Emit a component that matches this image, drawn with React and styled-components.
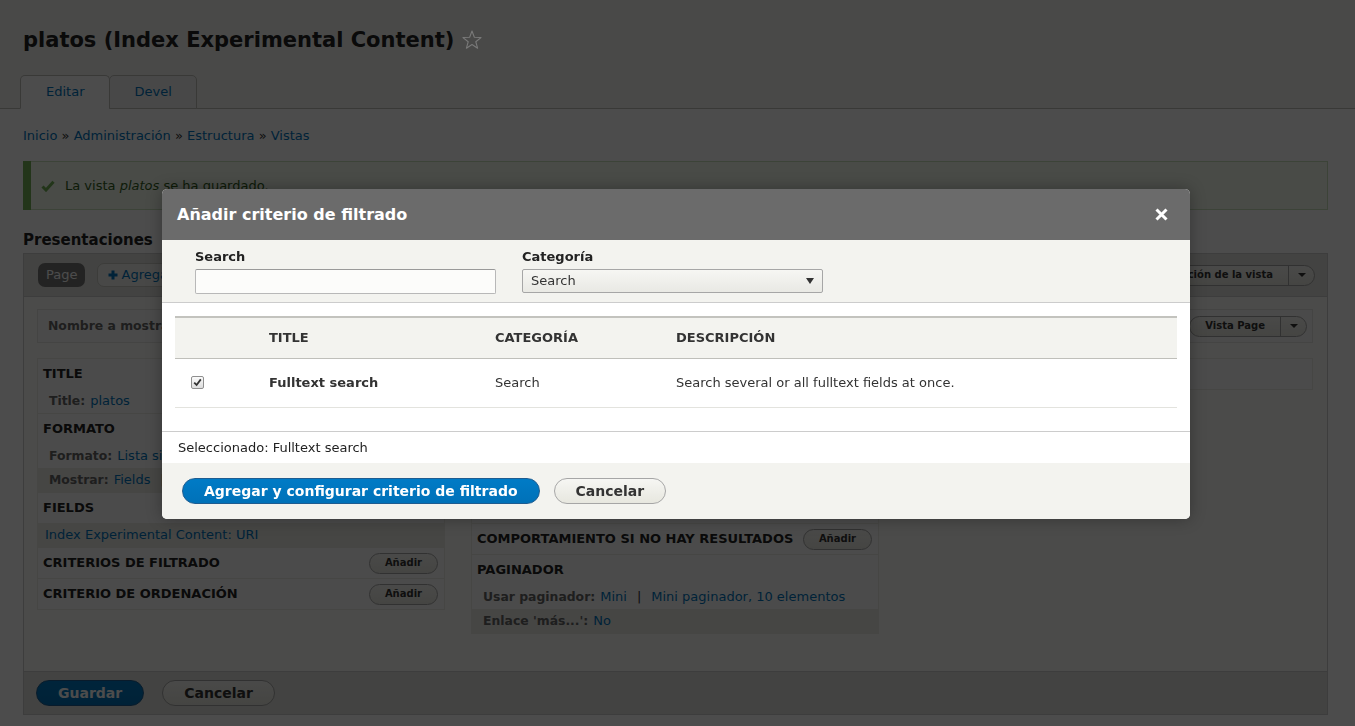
import React from 'react';
import styled, { createGlobalStyle } from 'styled-components';

// --- Global ---

const GlobalStyle = createGlobalStyle`
  html, body { margin: 0; padding: 0; }
  body {
    background: #fff;
    color: #222;
    font-family: "DejaVu Sans", "Liberation Sans", sans-serif;
    font-size: 13px;
    line-height: 20px;
  }
  * { box-sizing: border-box; }
`;

// --- Page header ---

const ContentHeader = styled.header`
  background: #f5f5f2;
  padding: 26px 27px 0 23px;
`;

const PageTitle = styled.h1`
  margin: 0;
  display: flex;
  align-items: center;
  gap: 8px;
  font-size: 21px;
  line-height: 28px;
  font-weight: bold;
  color: #222;
`;

// the shortcut star shows through the dialog overlay in the screenshot
const ShortcutStar = styled.span`
  position: relative;
  z-index: 101;
  display: inline-flex;
  opacity: 0.6;
`;

const Tabs = styled.ul`
  display: flex;
  list-style: none;
  height: 34px;
  margin: 21px -27px 0 -23px;
  padding: 0 0 0 20px;
  border-bottom: 1px solid #bfbfba;
`;

const Tab = styled.li`
  height: 34px;
  margin-bottom: -1px;
  margin-left: ${(p) => (p.$first ? '0' : '-1px')};
  padding: 0 24px 0 25px;
  display: flex;
  align-items: center;
  border: 1px solid #bfbfba;
  border-bottom-color: ${(p) => (p.$active ? '#fff' : '#bfbfba')};
  border-radius: 5px 5px 0 0;
  background: ${(p) => (p.$active ? '#fff' : '#f2f2f0')};
  color: #0074bd;
`;

// --- Main region ---

const Main = styled.main`
  padding: 0 27px 13px 23px;
`;

const Breadcrumb = styled.nav`
  margin-top: 17px;
  color: #333;
`;

const Link = styled.a`
  color: #0074bd;
  text-decoration: none;
`;

const Message = styled.div`
  margin: 15px 0 0 8px;
  display: flex;
  align-items: center;
  gap: 10px;
  padding: 14px 20px 13px 10px;
  border: 1px solid #c9e1bd;
  border-left: 0;
  background: #f3faef;
  box-shadow: -8px 0 0 #77b259;
  color: #325e1c;
`;

const SectionTitle = styled.h2`
  margin: 20px 0 3px;
  font-size: 15px;
  line-height: 20px;
  font-weight: bold;
  color: #222;
`;

// --- Views edit panel ---

const ViewPanel = styled.div`
  border: 1px solid #ccc;
  background: #fbfbf9;
`;

const DisplayBar = styled.div`
  height: 43px;
  display: flex;
  align-items: center;
  gap: 12px;
  padding: 0 12px 0 14px;
  background: #e1e2dc;
  border-bottom: 1px solid #ccc;
`;

const DisplayTab = styled.span`
  height: 24px;
  padding: 0 8px;
  display: flex;
  align-items: center;
  border-radius: 7px;
  background: #777;
  color: #fff;
`;

const AddDisplay = styled.span`
  height: 24px;
  padding: 0 10px;
  display: flex;
  align-items: center;
  gap: 3px;
  border: 1px solid #c8c8c2;
  border-radius: 7px;
  background: #f2f2ee;
  color: #0074bd;
`;

const DropButton = styled.div`
  margin-left: ${(p) => (p.$push ? 'auto' : '0')};
  height: 21px;
  display: flex;
  align-items: stretch;
  border: 1px solid #a6a6a6;
  border-radius: 11px;
  background: linear-gradient(to bottom, #f6f6f3, #e7e7df);
  color: #333;
  font-size: 10px;
  font-weight: bold;
`;

const DropMain = styled.span`
  display: flex;
  align-items: center;
  padding: 0 15px;
  border-right: 1px solid #a6a6a6;
`;

const DropToggle = styled.span`
  width: 25px;
  display: flex;
  align-items: center;
  justify-content: center;
  &::after {
    content: '';
    border-left: 4px solid transparent;
    border-right: 4px solid transparent;
    border-top: 4px solid #333;
  }
`;

const PanelBody = styled.div`
  padding: 12px 14px 37px 13px;
`;

const NameBox = styled.div`
  height: 34px;
  display: flex;
  align-items: center;
  padding: 0 5px 0 10px;
  border: 1px solid #e4e4df;
  background: #f9f9f7;
`;

const Label = styled.span`
  font-weight: bold;
  font-size: 12.4px;
  color: #666;
  margin-right: 5px;
`;

const Columns = styled.div`
  margin-top: 15px;
  display: grid;
  grid-template-columns: repeat(3, 1fr);
  gap: 26px;
  align-items: start;
`;

const Column = styled.div`
  border: 1px solid #e9e9e4;
  background: #fcfcfa;
`;

const Bucket = styled.div`
  border-bottom: 1px solid #e9e9e4;
  &:last-child { border-bottom: 0; }
`;

const BucketHeader = styled.div`
  height: 30px;
  display: flex;
  align-items: center;
  justify-content: space-between;
  padding: 0 6px 0 5px;
  font-weight: bold;
  text-transform: uppercase;
  color: #222;
`;

const SmallButton = styled.span`
  height: 21px;
  padding: 0 15px;
  display: inline-flex;
  align-items: center;
  border: 1px solid #a6a6a6;
  border-radius: 20px;
  background: linear-gradient(to bottom, #f6f6f3, #e7e7df);
  color: #333;
  font-size: 10px;
  font-weight: bold;
  text-transform: none;
`;

const SettingRow = styled.div`
  height: ${(p) => p.$h || 24}px;
  display: flex;
  align-items: center;
  padding: 0 ${(p) => p.$pad || 11}px;
  background: ${(p) => (p.$alt ? '#eaeae5' : 'transparent')};
  white-space: nowrap;
`;

const Sep = styled.span`
  margin: 0 10px;
  color: #333;
`;

const FormActions = styled.div`
  display: flex;
  gap: 18px;
  padding: 8px 12px 8px;
  background: #e1e2dc;
  border-top: 1px solid #ccc;
`;

const Button = styled.span`
  height: 26px;
  padding: 0 21px;
  display: inline-flex;
  align-items: center;
  border: 1px solid ${(p) => (p.$primary ? '#1e5c90' : '#a6a6a6')};
  border-radius: 20px;
  background: ${(p) =>
    p.$primary
      ? 'linear-gradient(to bottom, #007bc6, #0071b8)'
      : 'linear-gradient(to bottom, #f6f6f3, #e7e7df)'};
  color: ${(p) => (p.$primary ? '#fff' : '#333')};
  font-size: 14px;
  font-weight: bold;
  white-space: nowrap;
`;

// --- Dialog ---

const Overlay = styled.div`
  position: fixed;
  inset: 0;
  background: rgba(0, 0, 0, 0.7);
  z-index: 100;
`;

const Dialog = styled.div`
  position: fixed;
  top: 189px;
  left: 162px;
  width: 1028px;
  z-index: 101;
  background: #fff;
  border-radius: 5px;
  overflow: hidden;
  box-shadow: 0 0 16px rgba(0, 0, 0, 0.3);
`;

const TitleBar = styled.div`
  height: 51px;
  display: flex;
  align-items: center;
  justify-content: space-between;
  padding: 0 22px 0 15px;
  background: #6b6b6b;
  color: #fff;
  font-size: 16px;
  font-weight: bold;
`;

const Controls = styled.div`
  display: flex;
  gap: 26px;
  padding: 7px 33px 8px;
  background: #f3f3ef;
  border-bottom: 1px solid #ccc;
`;

const Field = styled.div`
  display: flex;
  flex-direction: column;
  gap: 2px;
  width: 301px;
`;

const FieldLabel = styled.label`
  font-weight: bold;
  color: #222;
`;

const TextInput = styled.input`
  height: 25px;
  border: 1px solid #b8b8b8;
  border-top-color: #999;
  border-radius: 2px;
  background: #fcfcfa;
  font: inherit;
`;

const SelectBox = styled.div`
  height: 24px;
  display: flex;
  align-items: center;
  justify-content: space-between;
  padding: 0 8px;
  border: 1px solid #a6a6a6;
  border-radius: 2px;
  background: linear-gradient(to bottom, #f6f6f3, #e9e9e4);
  color: #333;
  &::after {
    content: '';
    border-left: 4px solid transparent;
    border-right: 4px solid transparent;
    border-top: 6px solid #333;
  }
`;

const OptionsTable = styled.div`
  margin: 13px 13px 23px;
`;

const TableRow = styled.div`
  display: grid;
  grid-template-columns: 84px 226px 181px 1fr;
  align-items: center;
  height: ${(p) => (p.$head ? 43 : 49)}px;
  border-top: ${(p) => (p.$head ? '2px solid #c3c3be' : '0')};
  border-bottom: 1px solid ${(p) => (p.$head ? '#bfbfba' : '#e3e3de')};
  background: ${(p) => (p.$head ? '#f3f3ef' : '#fff')};
  font-weight: ${(p) => (p.$head ? 'bold' : 'normal')};
  text-transform: ${(p) => (p.$head ? 'uppercase' : 'none')};
  color: #333;
`;

const Cell = styled.div`
  padding-left: ${(p) => (p.$check ? 16 : 10)}px;
  font-weight: ${(p) => (p.$strong ? 'bold' : 'inherit')};
  display: flex;
  align-items: center;
`;

const FakeCheckbox = styled.span`
  width: 13px;
  height: 13px;
  display: inline-flex;
  align-items: center;
  justify-content: center;
  border: 1px solid #8f8f8f;
  border-radius: 2px;
  background: linear-gradient(to bottom, #fbfbfb, #dcdcdc);
  margin-top: -2px;
`;

const SelectedInfo = styled.div`
  padding: 6px 16px 5px;
  border-top: 1px solid #ccc;
  color: #222;
`;

const ButtonPane = styled.div`
  display: flex;
  gap: 14px;
  padding: 15px 20px;
  background: #f3f3ef;
`;

// --- Icons ---

const Star = () => (
  <svg width="20" height="20" viewBox="0 0 20 20">
    <polygon
      points="10,1 12.35,7.26 19.03,7.56 13.8,11.74 15.58,18.19 10,14.5 4.42,18.19 6.2,11.74 0.97,7.56 7.65,7.26"
      fill="none"
      stroke="#9a9a9a"
      strokeWidth="1.1"
      strokeLinejoin="round"
    />
  </svg>
);

const Check = () => (
  <svg width="14" height="12" viewBox="0 0 14 12">
    <path d="M1.5 6.5 L5 10 L12.5 1.8" fill="none" stroke="#73b355" strokeWidth="3" />
  </svg>
);

const Plus = () => (
  <svg width="10" height="10" viewBox="0 0 10 10">
    <path d="M5 0.5 V9.5 M0.5 5 H9.5" stroke="#0074bd" strokeWidth="3" />
  </svg>
);

const CloseX = () => (
  <svg width="13" height="13" viewBox="0 0 13 13">
    <path d="M1.5 1.5 L11.5 11.5 M11.5 1.5 L1.5 11.5" stroke="#fff" strokeWidth="3" />
  </svg>
);

const Tick = () => (
  <svg width="9" height="9" viewBox="0 0 9 9">
    <path d="M1.2 4.6 L3.6 7 L7.8 1.4" fill="none" stroke="#333" strokeWidth="1.8" />
  </svg>
);

// --- Component ---

const App = () => (
  <>
    <GlobalStyle />
    <ContentHeader>
      <PageTitle>
        platos (Index Experimental Content)
        <ShortcutStar><Star /></ShortcutStar>
      </PageTitle>
      <Tabs>
        <Tab $first $active>Editar</Tab>
        <Tab>Devel</Tab>
      </Tabs>
    </ContentHeader>

    <Main>
      <Breadcrumb>
        <Link>Inicio</Link> » <Link>Administración</Link> » <Link>Estructura</Link> » <Link>Vistas</Link>
      </Breadcrumb>

      <Message>
        <Check />
        <span>La vista <em>platos</em> se ha guardado.</span>
      </Message>

      <SectionTitle>Presentaciones</SectionTitle>

      <ViewPanel>
        <DisplayBar>
          <DisplayTab>Page</DisplayTab>
          <AddDisplay><Plus />Agregar Page</AddDisplay>
          <DropButton $push>
            <DropMain>Editar nombre/descripción de la vista</DropMain>
            <DropToggle />
          </DropButton>
        </DisplayBar>

        <PanelBody>
          <NameBox>
            <Label>Nombre a mostrar:</Label>
            <Link>Page</Link>
            <DropButton $push>
              <DropMain>Vista Page</DropMain>
              <DropToggle />
            </DropButton>
          </NameBox>

          <Columns>
            <Column>
              <Bucket>
                <BucketHeader>Title</BucketHeader>
                <SettingRow><Label>Title:</Label><Link>platos</Link></SettingRow>
              </Bucket>
              <Bucket>
                <BucketHeader>Formato</BucketHeader>
                <SettingRow>
                  <Label>Formato:</Label><Link>Lista sin formato</Link>
                  <Sep>|</Sep><Link>Configuración</Link>
                </SettingRow>
                <SettingRow $alt>
                  <Label>Mostrar:</Label><Link>Fields</Link>
                  <Sep>|</Sep><Link>Configuración</Link>
                </SettingRow>
              </Bucket>
              <Bucket>
                <BucketHeader>Fields <SmallButton>Añadir</SmallButton></BucketHeader>
                <SettingRow $alt $pad={7} $h={24}><Link>Index Experimental Content: URI</Link></SettingRow>
              </Bucket>
              <Bucket>
                <BucketHeader>Criterios de filtrado <SmallButton>Añadir</SmallButton></BucketHeader>
              </Bucket>
              <Bucket>
                <BucketHeader>Criterio de ordenación <SmallButton>Añadir</SmallButton></BucketHeader>
              </Bucket>
            </Column>

            <Column>
              <Bucket>
                <BucketHeader>Configuración de Page</BucketHeader>
                <SettingRow><Label>Ruta:</Label><Link>/platos</Link></SettingRow>
                <SettingRow $alt><Label>Menú:</Label><Link>Sin menú</Link></SettingRow>
                <SettingRow><Label>Acceso:</Label><Link>Ninguno</Link></SettingRow>
              </Bucket>
              <Bucket>
                <BucketHeader>Cabecera <SmallButton>Añadir</SmallButton></BucketHeader>
              </Bucket>
              <Bucket>
                <BucketHeader>Pie de página <SmallButton>Añadir</SmallButton></BucketHeader>
              </Bucket>
              <Bucket>
                <BucketHeader>Comportamiento si no hay resultados <SmallButton>Añadir</SmallButton></BucketHeader>
              </Bucket>
              <Bucket>
                <BucketHeader>Paginador</BucketHeader>
                <SettingRow>
                  <Label>Usar paginador:</Label><Link>Mini</Link>
                  <Sep>|</Sep><Link>Mini paginador, 10 elementos</Link>
                </SettingRow>
                <SettingRow $alt><Label>Enlace 'más...':</Label><Link>No</Link></SettingRow>
              </Bucket>
            </Column>

            <Column>
              <Bucket>
                <BucketHeader>▸ Avanzado</BucketHeader>
              </Bucket>
            </Column>
          </Columns>
        </PanelBody>

        <FormActions>
          <Button $primary>Guardar</Button>
          <Button>Cancelar</Button>
        </FormActions>
      </ViewPanel>
    </Main>

    <Overlay />
    <Dialog role="dialog">
      <TitleBar>
        <span>Añadir criterio de filtrado</span>
        <CloseX />
      </TitleBar>
      <Controls>
        <Field>
          <FieldLabel>Search</FieldLabel>
          <TextInput type="text" />
        </Field>
        <Field>
          <FieldLabel>Categoría</FieldLabel>
          <SelectBox>Search</SelectBox>
        </Field>
      </Controls>
      <OptionsTable>
        <TableRow $head>
          <Cell />
          <Cell>Title</Cell>
          <Cell>Categoría</Cell>
          <Cell>Descripción</Cell>
        </TableRow>
        <TableRow>
          <Cell $check><FakeCheckbox><Tick /></FakeCheckbox></Cell>
          <Cell $strong>Fulltext search</Cell>
          <Cell>Search</Cell>
          <Cell>Search several or all fulltext fields at once.</Cell>
        </TableRow>
      </OptionsTable>
      <SelectedInfo>Seleccionado: Fulltext search</SelectedInfo>
      <ButtonPane>
        <Button $primary>Agregar y configurar criterio de filtrado</Button>
        <Button>Cancelar</Button>
      </ButtonPane>
    </Dialog>
  </>
);

export default App;
